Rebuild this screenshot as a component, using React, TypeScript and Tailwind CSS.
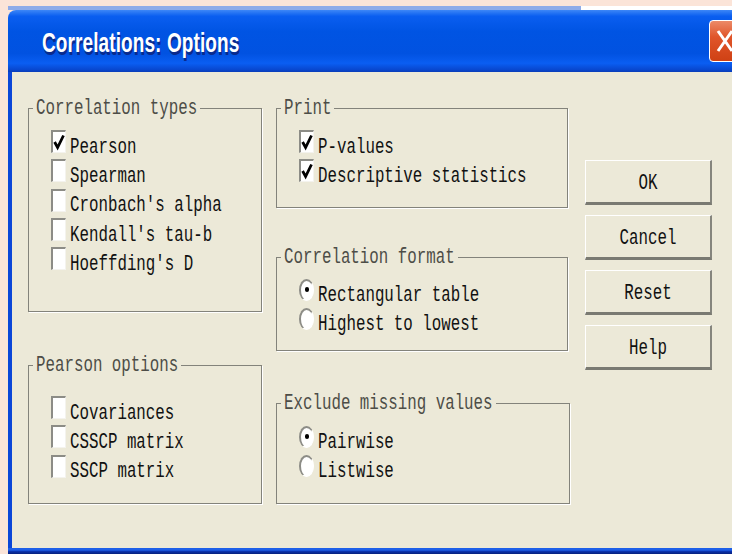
const correlationTypes = [
  { label: "Pearson", on: true },
  { label: "Spearman", on: false },
  { label: "Cronbach's alpha", on: false },
  { label: "Kendall's tau-b", on: false },
  { label: "Hoeffding's D", on: false },
];

const pearsonOptions = ["Covariances", "CSSCP matrix", "SSCP matrix"];

const buttons = ["OK", "Cancel", "Reset", "Help"];

const Txt = ({ children, low }: { children: React.ReactNode; low?: boolean }) => (
  <span
    className={
      low
        ? "inline-block translate-y-[3px] scale-y-[1.4] whitespace-pre"
        : "inline-block scale-y-[1.4] whitespace-pre"
    }
  >
    {children}
  </span>
);

const Check = ({ on }: { on: boolean }) => (
  <span className="mb-[8px] flex h-[23px] w-[15px] shrink-0 border-t-2 border-r border-b border-l-2 border-t-[#8c8c86] border-r-[#f4f3ee] border-b-[#f4f3ee] border-l-[#8c8c86] bg-white">
    {on && (
      <svg viewBox="0 0 12 20" className="h-full w-full">
        <path d="M1.6 10 L4.6 15.5 L10.5 3.5" fill="none" stroke="#000" strokeWidth="2.8" />
      </svg>
    )}
  </span>
);

const Radio = ({ on }: { on: boolean }) => (
  <span className="mb-[8px] flex h-[22px] w-[15px] shrink-0 items-center justify-center rounded-[50%] border-t-2 border-r border-b border-l-2 border-t-[#8c8c86] border-r-white border-b-white border-l-[#8c8c86] bg-white">
    {on && <span className="mb-[2px] h-[5px] w-[4px] rounded-full bg-black" />}
  </span>
);

const Row = ({ children, label }: { children: React.ReactNode; label: string }) => (
  <div className="flex h-[29.3px] items-center gap-[4px] text-[#111]">
    {children}
    <Txt low>{label}</Txt>
  </div>
);

const Group = ({
  title,
  className,
  children,
}: {
  title: string;
  className: string;
  children: React.ReactNode;
}) => (
  <fieldset className={`border border-[#83837b] shadow-[1px_1px_0_#fff] ${className}`}>
    <legend className="ml-[4px] h-[20px] px-[3px] leading-[20px] text-[#4d4d47]">
      <Txt>{title}</Txt>
    </legend>
    {children}
  </fieldset>
);

export default function App() {
  return (
    <div className="flex h-[554px] w-[732px] flex-col overflow-hidden bg-[#fbe4d8] font-['Liberation_Mono',monospace] text-[15.8px]">
      <div className="h-[6px] shrink-0" />
      <div className="flex h-[4px] shrink-0 pl-[8px]">
        <div className="w-[573px] bg-[#8eabe9]" />
        <div className="flex-1 bg-white" />
      </div>

      <div className="ml-[8px] flex w-[740px] flex-1 flex-col">
        {/* title bar */}
        <div className="flex h-[62px] shrink-0 items-center rounded-tl-[8px] bg-[linear-gradient(to_bottom,#3d87f7_0%,#0a5ef0_10%,#0054e3_35%,#0152e1_70%,#0a5ef2_86%,#0848d0_96%,#0a3db8_100%)] pl-[34px]">
          <span className="inline-block translate-y-[2px] scale-y-[1.5] font-['Liberation_Sans',sans-serif] text-[19px] font-bold tracking-[0.1px] text-white [text-shadow:1px_2px_0_#0a2a8c]">
            Correlations: Options
          </span>
          <div className="mr-[7px] ml-auto flex h-[42px] w-[32px] items-center justify-center rounded-[4px] border border-white bg-[linear-gradient(to_bottom,#ec8a68,#e0552a_40%,#cf4114)]">
            <svg viewBox="0 0 18 22" className="h-[22px] w-[18px]">
              <path d="M2 1 L16 21 M16 1 L2 21" stroke="#fff" strokeWidth="3" fill="none" />
            </svg>
          </div>
        </div>

        {/* body */}
        <div className="flex flex-1 border-l-4 border-[#0b46d8] bg-[#ece9d8] pt-[26px] pl-[16px]">
          <div className="flex w-[234px] flex-col">
            <Group title="Correlation types" className="h-[214px] w-[234px]">
              <div className="pt-[13px] pl-[22px]">
                {correlationTypes.map((c) => (
                  <Row key={c.label} label={c.label}>
                    <Check on={c.on} />
                  </Row>
                ))}
              </div>
            </Group>
            <Group title="Pearson options" className="mt-[43px] h-[149px] w-[234px]">
              <div className="pt-[22px] pl-[22px]">
                {pearsonOptions.map((p) => (
                  <Row key={p} label={p}>
                    <Check on={false} />
                  </Row>
                ))}
              </div>
            </Group>
          </div>

          <div className="ml-[14px] flex w-[294px] flex-col">
            <Group title="Print" className="h-[110px] w-[292px]">
              <div className="pt-[13px] pl-[22px]">
                <Row label="P-values">
                  <Check on />
                </Row>
                <Row label="Descriptive statistics">
                  <Check on />
                </Row>
              </div>
            </Group>
            <Group title="Correlation format" className="mt-[39px] h-[104px] w-[292px]">
              <div className="pt-[12px] pl-[22px]">
                <Row label="Rectangular table">
                  <Radio on />
                </Row>
                <Row label="Highest to lowest">
                  <Radio on={false} />
                </Row>
              </div>
            </Group>
            <Group title="Exclude missing values" className="mt-[42px] h-[111px] w-[294px]">
              <div className="pt-[13px] pl-[22px]">
                <Row label="Pairwise">
                  <Radio on />
                </Row>
                <Row label="Listwise">
                  <Radio on={false} />
                </Row>
              </div>
            </Group>
          </div>

          <div className="mt-[62px] ml-[15px] flex flex-col gap-[10px]">
            {buttons.map((b) => (
              <button
                key={b}
                className="flex h-[45px] w-[127px] items-center justify-center border-t border-r-2 border-b-[3px] border-l border-t-white border-r-[#85857d] border-b-[#7a7a72] border-l-white bg-[#ece9d8] text-[#111]"
              >
                <Txt low>{b}</Txt>
              </button>
            ))}
          </div>
        </div>

        <div className="h-[6px] shrink-0 bg-[linear-gradient(to_bottom,#1d5fe8_0%,#1d5fe8_35%,#0a2fa8_60%,#07207c_100%)]" />
      </div>
    </div>
  );
}
